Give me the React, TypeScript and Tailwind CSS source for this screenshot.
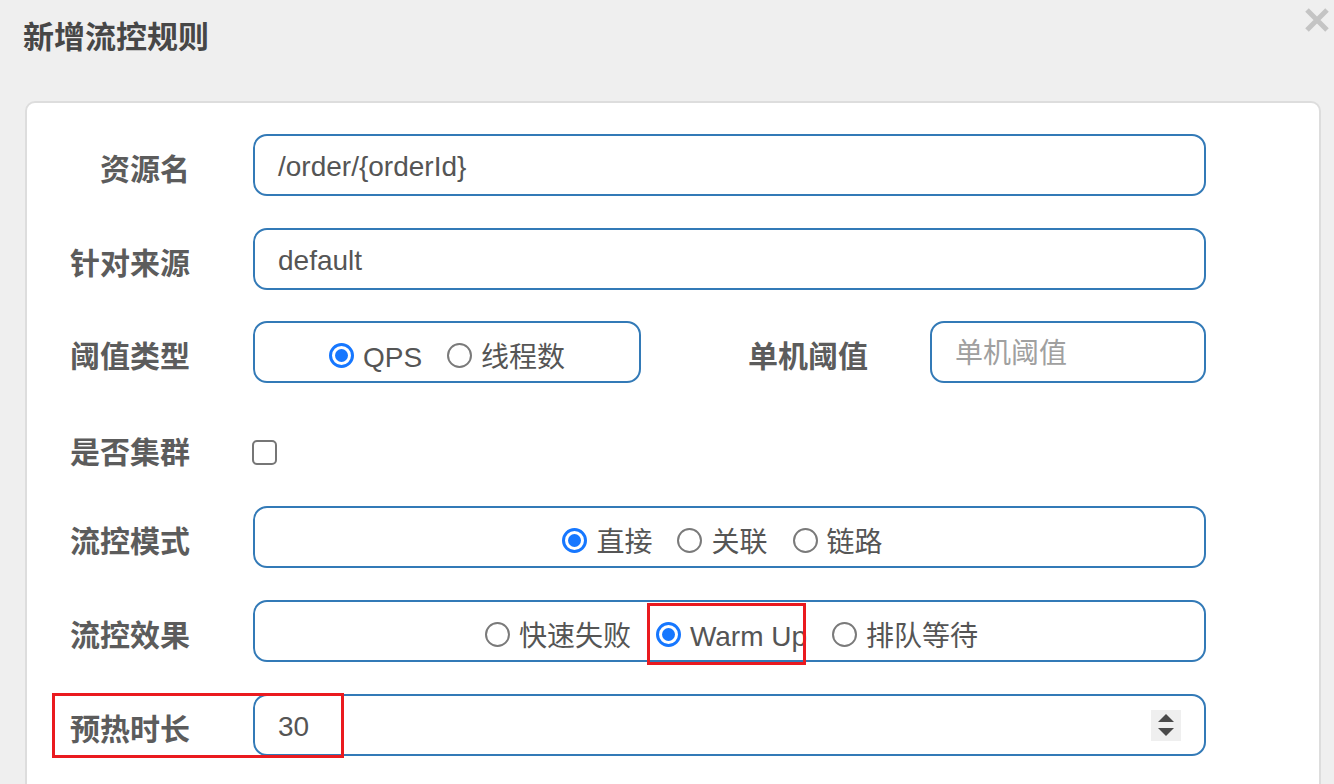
import React from "react";

const FONT = "font-['Liberation_Sans','Noto_Sans_CJK_SC',sans-serif]";

function Radio({ checked, label }: { checked?: boolean; label: string }) {
  return (
    <div className="flex items-center">
      {checked ? (
        <span className="w-[25px] h-[25px] rounded-full border-[3px] border-[#1677ff] flex items-center justify-center bg-white">
          <span className="w-[13px] h-[13px] rounded-full bg-[#1677ff]" />
        </span>
      ) : (
        <span className="w-[25px] h-[25px] rounded-full border-2 border-[#7a7a7a] bg-white" />
      )}
      <span className="ml-[9px] text-[28px] leading-[32px] text-[#555] pt-[4px]">{label}</span>
    </div>
  );
}

function Label({ children, offset = true }: { children: React.ReactNode; offset?: boolean }) {
  return (
    <div
      className={
        "w-[163px] shrink-0 text-right text-[30px] font-bold leading-[40px] text-[#5c5c5c] " +
        (offset ? "pt-[9px]" : "")
      }
    >
      {children}
    </div>
  );
}

function TextBox({ value, placeholder, className = "" }: { value?: string; placeholder?: string; className?: string }) {
  return (
    <div
      className={
        "h-[62px] border-2 border-[#337ab7] rounded-[14px] pl-[23px] pt-[4px] flex items-center text-[28px] " +
        className
      }
    >
      {value ? (
        <span className="text-[#555]">{value}</span>
      ) : (
        <span className="text-[#a0a0a0]">{placeholder}</span>
      )}
    </div>
  );
}

export default function App() {
  return (
    <div className={"relative w-[1334px] h-[784px] overflow-hidden bg-[#efefef] " + FONT}>
      {/* header */}
      <div className="pl-[23px] pt-[18px]">
        <h1 className="text-[31px] font-bold leading-[40px] text-[#474747]">新增流控规则</h1>
      </div>
      <button className="absolute top-[7px] right-[4px] w-[26px] h-[26px]">
        <svg viewBox="0 0 26 26" width="26" height="26">
          <path d="M3 3 L23 23 M23 3 L3 23" stroke="#c4c4c4" strokeWidth="5" strokeLinecap="butt" />
        </svg>
      </button>

      {/* card */}
      <div className="ml-[25px] mr-[13px] mt-[43px] h-[720px] bg-white border-2 border-[#dddddd] rounded-[10px] pt-[31px]">
        {/* row 1 */}
        <div className="flex items-center h-[62px]">
          <Label>资源名</Label>
          <TextBox className="ml-[63px] w-[953px]" value="/order/{orderId}" />
        </div>
        {/* row 2 */}
        <div className="flex items-center h-[62px] mt-[32px]">
          <Label>针对来源</Label>
          <TextBox className="ml-[63px] w-[953px]" value="default" />
        </div>
        {/* row 3 */}
        <div className="flex items-center h-[62px] mt-[31px]">
          <Label>阈值类型</Label>
          <div className="ml-[63px] w-[388px] h-[62px] border-2 border-[#337ab7] rounded-[14px] flex items-center justify-center gap-[25px] pt-[7px]">
            <Radio checked label="QPS" />
            <Radio label="线程数" />
          </div>
          <div className="w-[227px] shrink-0 text-right text-[30px] font-bold leading-[40px] text-[#5c5c5c] pt-[9px]">
            单机阈值
          </div>
          <TextBox className="ml-[62px] w-[276px]" placeholder="单机阈值" />
        </div>
        {/* row 4 */}
        <div className="flex items-center h-[25px] mt-[57px]">
          <Label offset={false}>是否集群</Label>
          <span className="ml-[62px] w-[25px] h-[25px] rounded-[5px] border-2 border-[#767676] bg-white" />
        </div>
        {/* row 5 */}
        <div className="flex items-center h-[62px] mt-[41px]">
          <Label>流控模式</Label>
          <div className="ml-[63px] w-[953px] h-[62px] border-2 border-[#337ab7] rounded-[14px] flex items-center justify-center gap-[25px] pt-[7px] pr-[14px]">
            <Radio checked label="直接" />
            <Radio label="关联" />
            <Radio label="链路" />
          </div>
        </div>
        {/* row 6 */}
        <div className="flex items-center h-[62px] mt-[32px]">
          <Label>流控效果</Label>
          <div className="ml-[63px] w-[953px] h-[62px] border-2 border-[#337ab7] rounded-[14px] flex items-center justify-center gap-[25px] pt-[7px] pl-[4px]">
            <Radio label="快速失败" />
            <Radio checked label="Warm Up" />
            <Radio label="排队等待" />
          </div>
        </div>
        {/* row 7 */}
        <div className="flex items-center h-[62px] mt-[32px]">
          <Label>预热时长</Label>
          <div className="ml-[63px] w-[953px] h-[62px] border-2 border-[#337ab7] rounded-[14px] pl-[23px] pr-[23px] flex items-center justify-between text-[28px]">
            <span className="text-[#555] pt-[4px]">30</span>
            <span className="w-[30px] h-[31px] bg-[#efefef] flex flex-col items-center justify-center gap-[6px]">
              <svg width="16" height="8" viewBox="0 0 16 8">
                <path d="M8 0 L16 8 L0 8 Z" fill="#4a4a4a" />
              </svg>
              <svg width="16" height="8" viewBox="0 0 16 8">
                <path d="M0 0 L16 0 L8 8 Z" fill="#4a4a4a" />
              </svg>
            </span>
          </div>
        </div>
      </div>

      {/* red annotation boxes */}
      <div className="absolute left-[647px] top-[603px] w-[159px] h-[62px] border-[3px] border-[#ea1a1f]" />
      <div className="absolute left-[52px] top-[693px] w-[292px] h-[65px] border-[3px] border-[#ea1a1f]" />
    </div>
  );
}
